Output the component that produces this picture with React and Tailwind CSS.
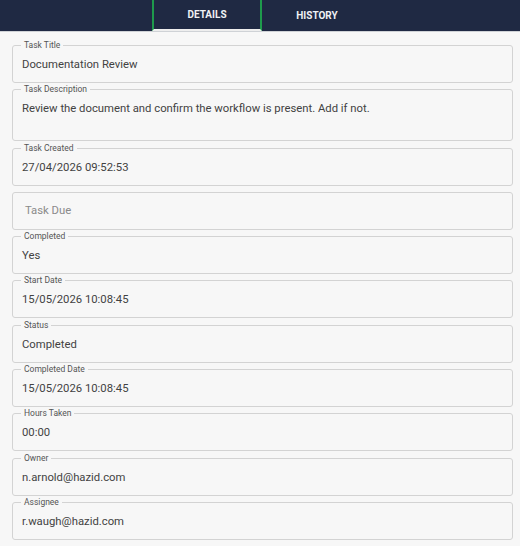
import { useState } from "react";

const fields = [
  { label: "Task Title", value: "Documentation Review" },
  {
    label: "Task Description",
    value: "Review the document and confirm the workflow is present. Add if not.",
    multiline: true,
  },
  { label: "Task Created", value: "27/04/2026 09:52:53" },
  { label: "", value: "", placeholder: "Task Due" },
  { label: "Completed", value: "Yes" },
  { label: "Start Date", value: "15/05/2026 10:08:45" },
  { label: "Status", value: "Completed" },
  { label: "Completed Date", value: "15/05/2026 10:08:45" },
  { label: "Hours Taken", value: "00:00" },
  { label: "Owner", value: "n.arnold@hazid.com" },
  { label: "Assignee", value: "r.waugh@hazid.com" },
];

const Field = ({ label, value, placeholder, multiline }) => {
  return (
    <div
      className={`relative border border-[#d3d3d3] rounded-[3px] px-[9px] text-[11.3px] leading-[14px] ${
        multiline ? "h-[52px] pt-[12px]" : "h-[38px] flex items-center"
      }`}
    >
      {label && (
        <span className="absolute -top-[7px] left-[8px] px-[3px] bg-[#f7f7f7] text-[8.5px] leading-[12px] text-[#555]">
          {label}
        </span>
      )}

      {placeholder ? (
        <span className="text-[#8a8a8a] pl-[3px] pt-[1px]">{placeholder}</span>
      ) : (
        <span className="text-[#424242] pt-[2px]">{value}</span>
      )}
    </div>
  );
};

const App = () => {
  const [tab, setTab] = useState("details");

  return (
    <div className="w-[520px] h-[546px] bg-[#f7f7f7] overflow-hidden font-['Roboto',sans-serif]">

      {/* Header */}
      <div className="h-[32px] bg-[#1f2943] border-b border-[#cfd2d6] flex justify-center pl-[4px]">
        <button
          onClick={() => setTab("details")}
          className={`w-[110px] h-full text-[10px] font-bold text-[#f0f2f5] ${
            tab === "details"
              ? "border-x-2 border-[#1e9a4c] border-b-2 border-b-[#eeeeee]"
              : ""
          }`}
        >
          DETAILS
        </button>
        <button
          onClick={() => setTab("history")}
          className={`w-[110px] h-full text-[10px] font-bold text-[#f0f2f5] ${
            tab === "history"
              ? "border-x-2 border-[#1e9a4c] border-b-2 border-b-[#eeeeee]"
              : ""
          }`}
        >
          HISTORY
        </button>
      </div>

      {/* Fields */}
      <div className="flex flex-col gap-[6.3px] pl-[12px] pr-[7px] pt-[13px]">
        {fields.map((f, i) => (
          <Field key={i} {...f} />
        ))}
      </div>
    </div>
  );
};

export default App;
